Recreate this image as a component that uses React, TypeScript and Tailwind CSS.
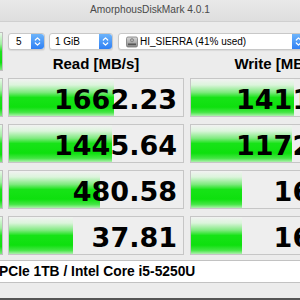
import React from "react";

const reads = [
  { v: "1662.23", w: 105 },
  { v: "1445.64", w: 103 },
  { v: "480.58", w: 91 },
  { v: "37.81", w: 64 },
];
const writes = [
  { v: "1411.80", w: 103 },
  { v: "1172.35", w: 101 },
  { v: "16.52", w: 51 },
  { v: "16.07", w: 51 },
];

function Stepper() {
  return (
    <div className="w-[13px] h-full rounded-r-[3px] bg-[linear-gradient(to_bottom,#6db4fb,#2f80f4)] flex items-center justify-center shrink-0">
      <svg width="7" height="11" viewBox="0 0 7 11" fill="none">
        <path d="M1.3 4 L3.5 1.8 L5.7 4" stroke="white" strokeWidth="1.2" strokeLinecap="round" strokeLinejoin="round" />
        <path d="M1.3 7 L3.5 9.2 L5.7 7" stroke="white" strokeWidth="1.2" strokeLinecap="round" strokeLinejoin="round" />
      </svg>
    </div>
  );
}

function DiskIcon() {
  return (
    <svg width="12" height="12" viewBox="0 0 12 12">
      <defs>
        <linearGradient id="dg" x1="0" y1="0" x2="0" y2="1">
          <stop offset="0" stopColor="#d8d8d8" />
          <stop offset="1" stopColor="#8a8a8a" />
        </linearGradient>
      </defs>
      <rect x="0.5" y="1" width="11" height="10" rx="1.5" fill="url(#dg)" stroke="#7a7a7a" strokeWidth="0.8" />
      <rect x="2" y="7.5" width="8" height="1.6" fill="#555" />
      <circle cx="6" cy="4.2" r="1.6" fill="#b0b0b0" stroke="#6a6a6a" strokeWidth="0.6" />
    </svg>
  );
}

function Cell({ v, w }: { v: string; w: number }) {
  return (
    <div className="relative w-[176px] h-[39px] border border-[#c6c6c6] bg-[#eeeeee] shrink-0">
      <div
        className="h-full bg-[linear-gradient(to_bottom,#f2f2f2_0%,#dcf5dc_16%,#7fea7f_36%,#17e317_50%,#0ee00e_76%,#45e645_90%,#aef0ae_100%)]"
        style={{ width: w }}
      />
      <div className="absolute inset-0 flex items-center justify-end pr-[6px] pt-[4px]">
        <span className="font-['DejaVu_Sans',sans-serif] font-bold text-[27px] leading-none text-black">{v}</span>
      </div>
    </div>
  );
}

function SideButton() {
  return (
    <div className="w-[41px] h-[39px] border border-[#c0c0c0] bg-[linear-gradient(to_bottom,#eaf7ea_0%,#9eee9e_30%,#20e020_50%,#10df10_80%,#80ea80_100%)] shrink-0" />
  );
}

export default function App() {
  return (
    <div className="w-[300px] h-[300px] overflow-hidden bg-[#ececec] flex flex-col font-['Liberation_Sans',Arial,sans-serif]">
      <div className="h-[22px] shrink-0 border-b border-[#d0d0d0] bg-[linear-gradient(to_bottom,#e9e9e9,#dedede)] flex items-center justify-center">
        <span className="text-[10.2px] text-[#4a4a4a] leading-none">AmorphousDiskMark 4.0.1</span>
      </div>
      <div className="pt-[10px] ml-[-38px] w-[420px] flex flex-col gap-[7px]">
        <div className="flex h-[39px]">
          <SideButton />
          <div className="ml-[5px] flex flex-col">
            <div className="mt-[1px] flex h-[17px]">
              <div className="w-[37px] h-full flex bg-white border border-[#c8c8c8] rounded-[3px] shadow-[0_1px_1px_rgba(0,0,0,0.08)]">
                <div className="flex-1 flex items-center pl-[7px] text-[10px] text-black">5</div>
                <Stepper />
              </div>
              <div className="ml-[4px] w-[64px] h-full flex bg-white border border-[#c8c8c8] rounded-[3px] shadow-[0_1px_1px_rgba(0,0,0,0.08)]">
                <div className="flex-1 flex items-center pl-[5px] text-[10px] text-black">1 GiB</div>
                <Stepper />
              </div>
              <div className="ml-[5px] w-[188px] h-full flex bg-white border border-[#c8c8c8] rounded-[3px] shadow-[0_1px_1px_rgba(0,0,0,0.08)]">
                <div className="flex-1 flex items-center gap-[2px] pl-[7px] text-[10px] text-black">
                  <DiskIcon />
                  <span>HI_SIERRA (41% used)</span>
                </div>
                <Stepper />
              </div>
            </div>
            <div className="mt-[6px] flex gap-[6px]">
              <div className="w-[176px] text-center font-bold text-[15px] leading-none text-black">Read [MB/s]</div>
              <div className="w-[176px] text-center font-bold text-[15px] leading-none text-black">Write [MB/s]</div>
            </div>
          </div>
        </div>
        {reads.map((r, i) => (
          <div key={i} className="flex h-[39px]">
            <SideButton />
            <div className="ml-[5px] flex gap-[6px]">
              <Cell v={r.v} w={r.w} />
              <Cell v={writes[i].v} w={writes[i].w} />
            </div>
          </div>
        ))}
      </div>
      <div className="mt-[5px] h-[23px] shrink-0 bg-white border-y border-[#c2c2c2] flex items-center">
        <span className="ml-[-1px] font-bold text-[13.8px] leading-none text-black whitespace-nowrap">PCIe 1TB / Intel Core i5-5250U</span>
      </div>
      <div className="flex-1" />
      <div className="h-[2px] shrink-0 bg-[#555555]" />
    </div>
  );
}
